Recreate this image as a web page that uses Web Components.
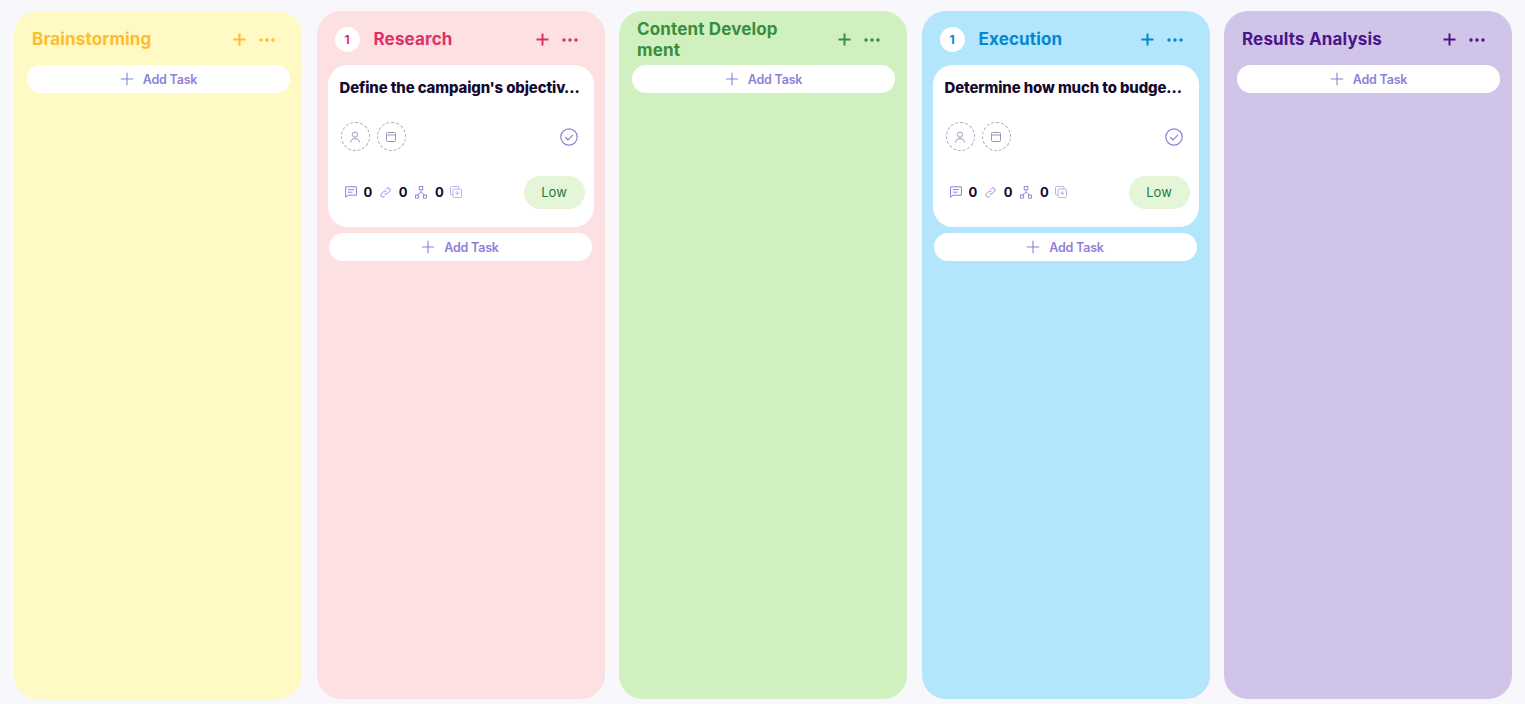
<!DOCTYPE html>
<html>
<head>
<meta charset="utf-8">
<title>Board</title>
<style>
  html, body { margin: 0; height: 100%; }
  body { background: #f7f7fc; font-family: Inter, "Liberation Sans", sans-serif; overflow: hidden; }
</style>
</head>
<body>
<kanban-board>
  <kanban-column name="Brainstorming" color="#fdbd2e" bg="#fff9c4"></kanban-column>
  <kanban-column name="Research" color="#de3068" bg="#fde0e2" count="1">
    <task-card title="Define the campaign's objectiv…"></task-card>
  </kanban-column>
  <kanban-column name="Content Development" color="#388e3c" bg="#d1f0bf" wrapped></kanban-column>
  <kanban-column name="Execution" color="#0288d1" bg="#b3e5fc" count="1">
    <task-card title="Determine how much to budge…"></task-card>
  </kanban-column>
  <kanban-column name="Results Analysis" color="#4a148c" bg="#d1c4e9"></kanban-column>
</kanban-board>

<script>
class KanbanBoard extends HTMLElement {
  constructor() {
    super();
    this.attachShadow({mode: 'open'});
    this.shadowRoot.innerHTML = `
      <style>
        :host {
          display: grid;
          grid-template-columns: repeat(5, 288px);
          column-gap: 14.5px;
          box-sizing: border-box;
          height: 704px;
          padding: 11px 0 5px 14px;
        }
      </style>
      <slot></slot>
    `;
  }
}

class AddTask extends HTMLElement {
  constructor() {
    super();
    this.attachShadow({mode: 'open'});
    this.shadowRoot.innerHTML = `
      <style>
        :host {
          display: flex;
          align-items: center;
          justify-content: center;
          gap: 9px;
          width: 263px;
          height: 28px;
          border-radius: 14px;
          background: #fff;
          color: #8f80d9;
          font: 600 12.5px Inter, "Liberation Sans", sans-serif;
          letter-spacing: -0.2px;
        }
        svg { display: block; }
      </style>
      <svg width="14" height="14" viewBox="0 0 14 14" fill="none" stroke="#8f80d9" stroke-width="1.1">
        <path d="M7 .8v12.4M.8 7h12.4"/>
      </svg>
      <span>Add Task</span>
    `;
  }
}

class KanbanColumn extends HTMLElement {
  constructor() {
    super();
    this.attachShadow({mode: 'open'});
    const name = this.getAttribute('name');
    const color = this.getAttribute('color');
    const count = this.getAttribute('count');
    const wrapped = this.hasAttribute('wrapped');
    // the long title breaks mid word in the narrow box
    this.shadowRoot.innerHTML = `
      <style>
        :host {
          display: flex;
          flex-direction: column;
          box-sizing: border-box;
          border-radius: 24px;
          padding: 0 12px 0 13px;
          background: ${this.getAttribute('bg')};
        }
        .head {
          display: flex;
          align-items: center;
          box-sizing: border-box;
          height: 54px;
          padding: 2px 0 0 5px;
          color: ${color};
        }
        .count {
          flex: none;
          display: flex;
          align-items: center;
          justify-content: center;
          width: 25px;
          height: 25px;
          margin-right: 14px;
          border-radius: 50%;
          background: #fff;
          font-size: 12px;
          font-weight: 700;
        }
        .name {
          flex: 1;
          min-width: 0;
          font-size: 17px;
          font-weight: 700;
          line-height: 21px;
          letter-spacing: 0.15px;
        }
        .wrapped {
          flex: none;
          width: 150px;
          padding-top: 2px;
          word-break: break-all;
          margin-right: auto;
        }
        svg { flex: none; display: block; margin-top: 1px; }
        .plus { margin-right: 13px; }
        .dots { margin-right: 15px; }
        .list { display: flex; flex-direction: column; gap: 6px; align-items: flex-start; }
        ::slotted(task-card) { margin-left: -2px; }
        add-task { margin-left: -1px; }
        .list.empty add-task { margin-left: 0; }
      </style>
      <div class="head">
        ${count ? `<span class="count">${count}</span>` : ''}
        <span class="name ${wrapped ? 'wrapped' : ''}">${name}</span>
        <svg class="plus" width="13" height="13" viewBox="0 0 13 13" fill="none" stroke="${color}" stroke-width="2">
          <path d="M6.5 .5v12M.5 6.5h12"/>
        </svg>
        <svg class="dots" width="16" height="4" viewBox="0 0 16 4" fill="${color}">
          <circle cx="2" cy="2" r="1.7"/><circle cx="8" cy="2" r="1.7"/><circle cx="14" cy="2" r="1.7"/>
        </svg>
      </div>
      <div class="list ${this.children.length ? '' : 'empty'}">
        <slot></slot>
        <add-task></add-task>
      </div>
    `;
  }
}

class TaskCard extends HTMLElement {
  constructor() {
    super();
    this.attachShadow({mode: 'open'});
    const s = '#8f80d9';
    this.shadowRoot.innerHTML = `
      <style>
        :host {
          display: block;
          box-sizing: border-box;
          width: 266px;
          height: 162px;
          padding: 13px 9px 0 11px;
          border-radius: 20px;
          background: #fff;
        }
        .title {
          padding-left: 1px;
          font-size: 14.9px;
          font-weight: 800;
          line-height: 20px;
          color: #14092e;
          white-space: nowrap;
          letter-spacing: -0.1px;
        }
        .people {
          display: flex;
          align-items: center;
          gap: 7px;
          margin-top: 24px;
          padding: 0 7px 0 2px;
        }
        .round {
          display: flex;
          align-items: center;
          justify-content: center;
          box-sizing: border-box;
          width: 29px;
          height: 29px;
          border: 1px dashed #a9a6c4;
          border-radius: 50%;
        }
        .check { margin-left: auto; }
        .foot {
          display: flex;
          align-items: center;
          margin-top: 25px;
          padding-left: 6px;
          line-height: 31px;
        }
        .n {
          font-size: 13px;
          font-weight: 700;
          color: #14092e;
          margin: 0 7.5px 0 8px;
        }
        .n:first-of-type { margin-left: 7px; }
        svg { display: block; flex: none; }
        .foot > svg { margin-top: -1px; }
        .low {
          display: flex;
          align-items: center;
          justify-content: center;
          width: 61px;
          height: 33px;
          margin-left: auto;
          padding-bottom: 1px;
          box-sizing: border-box;
          border-radius: 17px;
          background: #e4f5d8;
          color: #1b7a43;
          font-size: 13px;
        }
      </style>
      <div class="title">${this.getAttribute('title')}</div>
      <div class="people">
        <span class="round">
          <svg width="12" height="12" viewBox="0 0 12 12" fill="none" stroke="#9a97b8">
            <circle cx="6" cy="3.6" r="2.6"/><path d="M1.5 11.4c0-5 9-5 9 0"/>
          </svg>
        </span>
        <span class="round">
          <svg width="10" height="10" viewBox="0 0 10 10" fill="none" stroke="#9a97b8">
            <rect x=".5" y=".5" width="9" height="9" rx="1"/><path d="M.5 3h9"/>
          </svg>
        </span>
        <svg class="check" width="18" height="18" viewBox="0 0 18 18" fill="none" stroke="${s}" stroke-width="1.2">
          <circle cx="9" cy="9" r="8.2"/><path d="M5.2 9.2l2.8 2.6 5-5"/>
        </svg>
      </div>
      <div class="foot">
        <svg width="12" height="12" viewBox="0 0 12 12" fill="none" stroke="${s}">
          <path d="M.6 .8h10.8v8.4H3L.6 11.2zM3 3.6h6M3 6.2h4.5"/>
        </svg>
        <span class="n">0</span>
        <svg width="11" height="11" viewBox="0 0 11 11" fill="none" stroke="${s}" stroke-width=".9">
          <path d="M4.6 6.4a2 2 0 0 0 2.9 0l2-2a2 2 0 0 0-2.9-2.9l-.8.8M6.4 4.6a2 2 0 0 0-2.9 0l-2 2a2 2 0 0 0 2.9 2.9l.8-.8"/>
        </svg>
        <span class="n">0</span>
        <svg width="12" height="13" viewBox="0 0 12 13" fill="none" stroke="${s}" stroke-width=".9">
          <rect x="4.2" y=".5" width="3.6" height="3.4"/><rect x=".5" y="9.1" width="3" height="3"/><rect x="8.5" y="9.1" width="3" height="3"/>
          <path d="M6 3.9v2.4M6 6.3 2 9.1M6 6.3l4 2.8"/>
        </svg>
        <span class="n">0</span>
        <svg width="12" height="12" viewBox="0 0 12 12" fill="none" stroke="#b3a9e5" stroke-width=".9" style="margin-left:-1px">
          <rect x="3" y="3" width="8.5" height="8.5" rx="1.2"/><path d="M3 9H1.6A1.1 1.1 0 0 1 .5 7.9V1.6A1.1 1.1 0 0 1 1.6.5h6.3A1.1 1.1 0 0 1 9 1.6V3M7.2 5.3v3.9M5.3 7.2h3.9"/>
        </svg>
        <span class="low">Low</span>
      </div>
    `;
  }
}

customElements.define('kanban-board', KanbanBoard);
customElements.define('add-task', AddTask);
customElements.define('task-card', TaskCard);
customElements.define('kanban-column', KanbanColumn);
</script>
</body>
</html>
